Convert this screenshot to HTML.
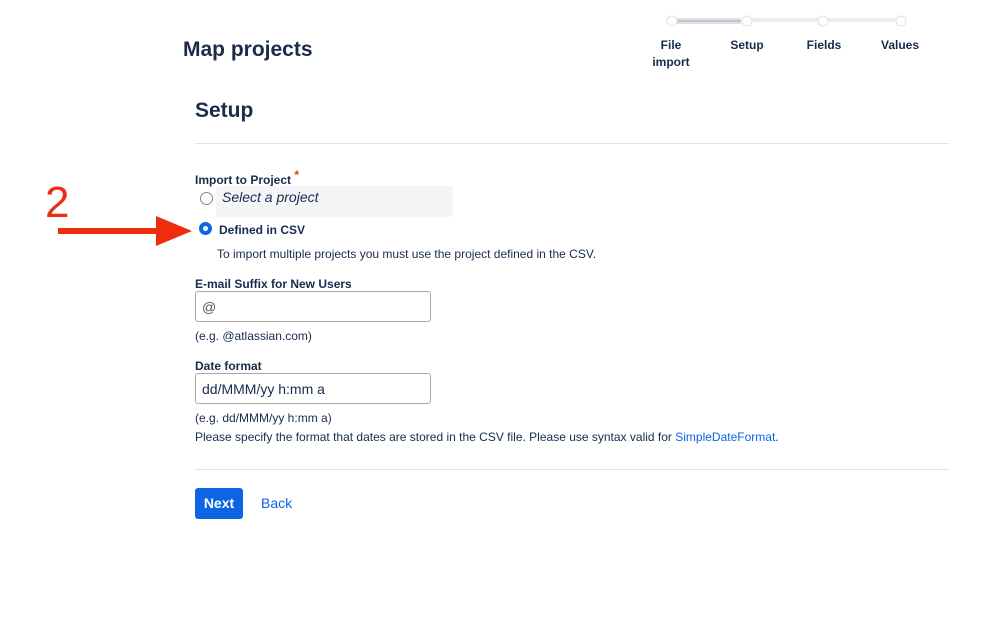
<!DOCTYPE html>
<html><head><meta charset="utf-8"><style>
body{margin:0;width:999px;height:641px;background:#fff;font-family:"Liberation Sans",sans-serif;color:#172b4d;position:relative;overflow:hidden}
.a{position:absolute}
.lbl{font-size:12px;font-weight:bold;color:#172b4d}
.t{font-size:12px;color:#172b4d}
.box{position:absolute;border:1px solid #aaa;border-radius:3px;background:#fff;box-sizing:border-box;font-size:14px;padding:7px 6px;color:#172b4d}
.step{font-size:12px;font-weight:bold;text-align:center;position:absolute;top:37px;width:60px;line-height:17px}
</style></head><body>
<div class="a" style="left:183px;top:38px;font-size:21px;font-weight:bold;color:#1c2b4a">Map projects</div>
<svg class="a" style="left:665px;top:13px" width="245" height="16">
<rect x="10" y="5" width="66" height="6" fill="#dfe1e6"/><rect x="10" y="7" width="66" height="2" fill="#c1c7d0"/>
<rect x="84" y="5" width="70" height="4" fill="#ebecf0"/>
<rect x="160" y="5" width="70" height="4" fill="#ebecf0"/>
<circle cx="7" cy="8" r="5" fill="#fff" stroke="#dfe1e6"/>
<circle cx="82" cy="8" r="5" fill="#fff" stroke="#dfe1e6"/>
<circle cx="158" cy="8" r="5" fill="#fff" stroke="#dfe1e6"/>
<circle cx="236" cy="8" r="5" fill="#fff" stroke="#dfe1e6"/>
</svg>
<div class="step" style="left:641px">File<br>import</div>
<div class="step" style="left:717px">Setup</div>
<div class="step" style="left:794px">Fields</div>
<div class="step" style="left:870px">Values</div>
<div class="a" style="left:195px;top:99px;font-size:21px;font-weight:bold;color:#1c2b4a">Setup</div>
<div class="a" style="left:195px;top:143px;width:754px;height:1px;background:#dfe1e6"></div>
<div class="a lbl" style="left:195px;top:173px">Import to Project <span style="color:#de350b;position:relative;top:-5px">*</span></div>
<div class="a" style="left:200px;top:192px;width:11px;height:11px;border:1px solid #888;border-radius:50%"></div>
<div class="a" style="left:216px;top:186px;width:237px;height:31px;background:#f4f5f7;border-radius:3px"></div>
<div class="a" style="left:222px;top:189px;font-size:14px;font-style:italic;color:#172b4d">Select a project</div>
<div class="a" style="left:199px;top:222px;width:13px;height:13px;border-radius:50%;background:#0c66e4"><div style="margin:4px;width:5px;height:5px;border-radius:50%;background:#fff"></div></div>
<div class="a lbl" style="left:219px;top:223px">Defined in CSV</div>
<div class="a t" style="left:217px;top:247px">To import multiple projects you must use the project defined in the CSV.</div>
<div class="a lbl" style="left:195px;top:277px">E-mail Suffix for New Users</div>
<div class="box" style="left:195px;top:291px;width:236px;height:31px;color:#555">@</div>
<div class="a t" style="left:195px;top:329px">(e.g. @atlassian.com)</div>
<div class="a lbl" style="left:195px;top:359px">Date format</div>
<div class="box" style="left:195px;top:373px;width:236px;height:31px">dd/MMM/yy h:mm a</div>
<div class="a t" style="left:195px;top:411px">(e.g. dd/MMM/yy h:mm a)</div>
<div class="a t" style="left:195px;top:430px">Please specify the format that dates are stored in the CSV file. Please use syntax valid for <span style="color:#0c66e4">SimpleDateFormat</span>.</div>
<div class="a" style="left:195px;top:469px;width:754px;height:1px;background:#dfe1e6"></div>
<div class="a" style="left:195px;top:488px;width:48px;height:31px;background:#0c66e4;border-radius:3px;color:#fff;font-size:14px;font-weight:bold;text-align:center;line-height:31px">Next</div>
<div class="a" style="left:261px;top:495px;font-size:14px;color:#0c66e4">Back</div>
<div class="a" style="left:45px;top:178px;font-size:44px;color:#ee2d0f">2</div>
<svg class="a" style="left:58px;top:211px" width="135" height="40"><rect x="0" y="17" width="100" height="6" fill="#ee2d0f"/><polygon points="98,5 134,20 98,35" fill="#ee2d0f"/></svg>
</body></html>
